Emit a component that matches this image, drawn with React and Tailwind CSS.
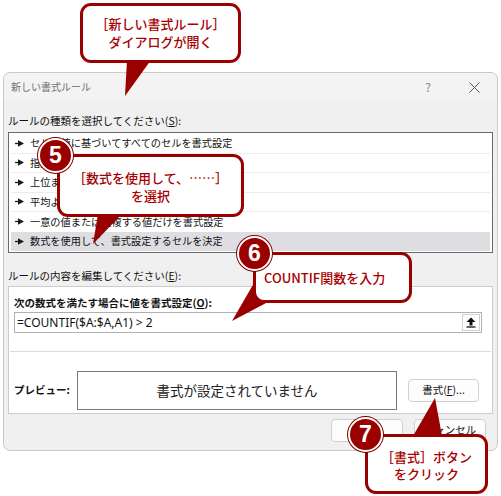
const F = "font-['Noto_Sans_CJK_JP','Noto_Sans',sans-serif]";

function Arrow() {
  return (
    <svg width="9" height="7" viewBox="0 0 9 7" className="shrink-0">
      <path d="M0 3.5h4" stroke="#1a1a1a" strokeWidth="1.3" />
      <path d="M3 0.3L9 3.5L3 6.7Z" fill="#1a1a1a" />
    </svg>
  );
}

const rules = [
  "セルの値に基づいてすべてのセルを書式設定",
  "指定の値を含むセルだけを書式設定",
  "上位または下位に入る値だけを書式設定",
  "平均より上または下の値だけを書式設定",
  "一意の値または重複する値だけを書式設定",
  "数式を使用して、書式設定するセルを決定",
];

function Circle({ n, className }) {
  return (
    <div
      className={
        "absolute w-[35px] h-[35px] rounded-full bg-[#9a0000] border-2 border-white shadow-[0_0_0_1px_#7a0000] flex items-center justify-center text-white font-['Liberation_Sans',sans-serif] font-bold text-[23px] leading-none " +
        className
      }
    >
      {n}
    </div>
  );
}

export default function App() {
  return (
    <div className={"relative w-[501px] h-[496px] bg-white overflow-hidden " + F}>
      <div className="h-[72px]" />
      {/* Dialog */}
      <div className="ml-[3px] w-[495px] h-[379px] bg-[#f0f0f0] border border-[#c9c9c9] rounded-[7px] flex flex-col">
        <div className="h-[28px] flex items-center pl-[7px] pr-[17px] bg-[#f3f3f3] rounded-t-[7px]">
          <span className="text-[10px] text-[#707070] leading-none">新しい書式ルール</span>
          <span className="ml-auto text-[12px] text-[#8a8a8a] leading-none mr-[38px]">?</span>
          <svg width="11" height="11" viewBox="0 0 11 11">
            <path d="M0.5 0.5L10.5 10.5M10.5 0.5L0.5 10.5" stroke="#555" strokeWidth="1" />
          </svg>
        </div>
        <div className="px-[4px] flex flex-col">
          <div className="h-[31px] flex items-end pb-[6px] text-[10.5px] leading-none text-[#111]">
            ルールの種類を選択してください(<u>S</u>):
          </div>
          <div className="h-[121px] bg-white border border-[#6a6a6a] px-[2px] py-[1px] flex flex-col">
            {rules.map((r, i) => (
              <div
                key={i}
                className={
                  "h-[19.5px] flex items-center gap-[6px] pl-[4px] text-[10.2px] leading-none text-[#111] " +
                  (i === 5 ? "bg-[#dedee2]" : i < 4 ? "border-b border-[#ececec]" : "")
                }
              >
                <Arrow />
                <span>{r}</span>
              </div>
            ))}
          </div>
          <div className="h-[33px] flex items-end pb-[5px] text-[10.5px] leading-none text-[#111]">
            ルールの内容を編集してください(<u>E</u>):
          </div>
          <div className="h-[128px] bg-white border border-[#cccccc] flex flex-col px-[5px]">
            <div className="h-[25px] flex items-end pb-[4px] text-[10.5px] font-bold leading-none text-[#111]">
              次の数式を満たす場合に値を書式設定(<u>O</u>):
            </div>
            <div className="h-[21px] w-[468px] border border-[#b0b0b0] flex items-center pl-[2px] pr-[1px]">
              <span className="text-[12px] leading-none text-[#111] font-['Noto_Sans',sans-serif]">=COUNTIF($A:$A,A1) &gt; 2</span>
              <div className="ml-auto w-[18px] h-[17px] border border-[#d0d0d0] bg-white flex items-center justify-center">
                <svg width="10" height="11" viewBox="0 0 10 11">
                  <path d="M5 0.5L9.5 5H6.5V8.5H3.5V5H0.5Z" fill="#111" />
                  <path d="M0.5 10h9" stroke="#111" strokeWidth="1.3" />
                </svg>
              </div>
            </div>
            <div className="mt-[18px] h-px bg-[#dcdcdc] -mx-[4px]" />
            <div className="mt-[19px] flex items-center">
              <span className="w-[63px] text-[10.5px] font-bold leading-none text-[#111]">プレビュー:</span>
              <div className="w-[320px] h-[39px] border border-[#7a7a7a] flex items-center justify-center text-[13.5px] text-[#222] leading-none">
                書式が設定されていません
              </div>
              <div className="ml-[11px] w-[71px] h-[23px] border border-[#d0d0d0] rounded-[4px] bg-[#fdfdfd] flex items-center justify-center text-[10.5px] text-[#111] leading-none">
                書式(<u>F</u>)...
              </div>
            </div>
          </div>
          <div className="mt-[5px] flex justify-end gap-[11px] pr-[7px]">
            <div className="w-[72px] h-[23px] border border-[#d0d0d0] rounded-[4px] bg-[#fdfdfd] flex items-center justify-center text-[10.5px] text-[#111] leading-none">
              OK
            </div>
            <div className="w-[72px] h-[23px] border border-[#d0d0d0] rounded-[4px] bg-[#fdfdfd] flex items-center justify-center text-[10.5px] text-[#111] leading-none">
              キャンセル
            </div>
          </div>
        </div>
      </div>

      {/* Callout tails */}
      <svg className="absolute left-0 top-0" width="501" height="496" viewBox="0 0 501 496">
        <polygon points="127,60 151,60 125,96" fill="#9a0000" />
        <polygon points="98,214 122,214 93,244" fill="#9a0000" />
        <polygon points="254,283 268,302 232,321" fill="#9a0000" />
        <polygon points="413,436 442,436 435,398" fill="#9a0000" />
      </svg>

      {/* Callout 1 */}
      <div className="absolute left-[80px] top-[3px] w-[161px] h-[60px] rounded-[11px] border-[3px] border-[#9a0000] bg-white flex flex-col items-center justify-center text-[#a80000] text-[13px] leading-[18px] font-medium">
        <span>［新しい書式ルール］</span>
        <span>ダイアログが開く</span>
      </div>

      {/* Callout 5 */}
      <div className="absolute left-[57px] top-[154px] w-[187px] h-[63px] rounded-[11px] border-[3px] border-[#9a0000] bg-white flex flex-col items-center justify-center pt-[2px] text-[#a80000] text-[13px] leading-[18px] font-medium">
        <span>［数式を使用して、……］</span>
        <span>を選択</span>
      </div>
      <Circle n="5" className="left-[38px] top-[138px]" />

      {/* Callout 6 */}
      <div className="absolute left-[253px] top-[252px] w-[159px] h-[51px] rounded-[11px] border-[3px] border-[#9a0000] bg-white flex items-center pl-[8px] text-[#a80000] text-[13px] leading-none font-medium">
        COUNTIF関数を入力
      </div>
      <Circle n="6" className="left-[237px] top-[236px]" />

      {/* Callout 7 */}
      <div className="absolute left-[365px] top-[434px] w-[123px] h-[60px] rounded-[11px] border-[3px] border-[#9a0000] bg-white flex flex-col items-center justify-center pt-[2px] text-[#a80000] text-[13px] leading-[17px] font-medium">
        <span>［書式］ボタン</span>
        <span>をクリック</span>
      </div>
      <Circle n="7" className="left-[348px] top-[417px]" />
    </div>
  );
}
